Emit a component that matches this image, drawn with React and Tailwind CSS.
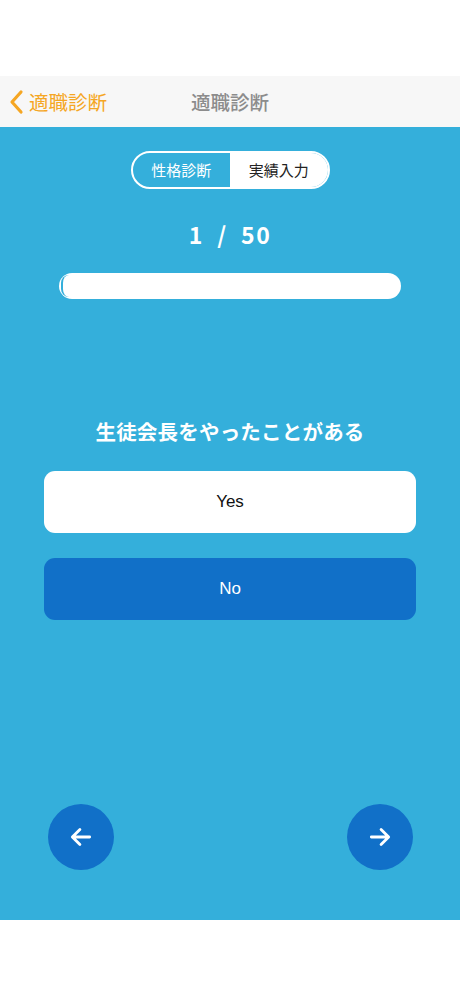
export default function App() {
    const font = { fontFamily: '"Noto Sans CJK JP", "Noto Sans", sans-serif' };
    return (
        <div className="flex h-[996px] w-[460px] flex-col bg-white" style={font}>
            <div className="h-[76px]" />
            <header className="relative flex h-[51px] items-center bg-[#f7f7f7]">
                <button className="flex items-center pl-[8px] text-[#f5a623]">
                    <svg width="18" height="26" viewBox="0 0 18 26" fill="none">
                        <path d="M13 3 L4 13 L13 23" stroke="#f5a623" strokeWidth="3.2" strokeLinecap="round" strokeLinejoin="round" />
                    </svg>
                    <span className="ml-[3px] text-[19.5px] leading-none">適職診断</span>
                </button>
                <h1 className="absolute left-1/2 -translate-x-1/2 text-[19.5px] font-medium leading-none text-[#8c8c8c]">適職診断</h1>
            </header>

            <main className="flex h-[793px] flex-col items-center bg-[#34afdb]">
                <div className="mt-[24px] flex h-[38px] w-[199px] overflow-hidden rounded-full border-2 border-white">
                    <div className="flex flex-1 items-center justify-center text-[15px] text-white">性格診断</div>
                    <div className="flex flex-1 items-center justify-center bg-white text-[15px] text-[#222]">実績入力</div>
                </div>

                <div className="mt-[34px] text-[23px] font-bold leading-none tracking-[1.5px] text-white">
                    1&nbsp;&nbsp;/&nbsp;&nbsp;50
                </div>

                <div className="relative mt-[27px] h-[26px] w-[342px] rounded-full bg-white">
                    <div className="absolute left-[2px] top-[2px] h-[22px] w-[8px] rounded-l-full border-l-2 border-[#34afdb]" />
                </div>

                <p className="mt-[122px] text-[20.5px] font-bold leading-none tracking-[0.2px] text-white">生徒会長をやったことがある</p>

                <div className="mt-[29px] flex w-[372px] flex-col gap-[25px]">
                    <button className="h-[62px] rounded-[11px] bg-white text-[17px] text-[#111]" style={{ fontFamily: '"Liberation Sans", sans-serif' }}>
                        Yes
                    </button>
                    <button className="h-[62px] rounded-[11px] bg-[#1170c8] text-[17px] text-white" style={{ fontFamily: '"Liberation Sans", sans-serif' }}>
                        No
                    </button>
                </div>

                <div className="mt-[184px] flex w-[365px] justify-between">
                    <button className="flex h-[66px] w-[66px] items-center justify-center rounded-full bg-[#1170c8]">
                        <svg width="26" height="26" viewBox="0 0 24 24" fill="none" stroke="white" strokeWidth="2.6" strokeLinecap="round" strokeLinejoin="round">
                            <path d="M20 12H4.5M11 5l-7 7 7 7" />
                        </svg>
                    </button>
                    <button className="flex h-[66px] w-[66px] items-center justify-center rounded-full bg-[#1170c8]">
                        <svg width="26" height="26" viewBox="0 0 24 24" fill="none" stroke="white" strokeWidth="2.6" strokeLinecap="round" strokeLinejoin="round">
                            <path d="M4 12h15.5M13 5l7 7-7 7" />
                        </svg>
                    </button>
                </div>
            </main>
        </div>
    );
}
